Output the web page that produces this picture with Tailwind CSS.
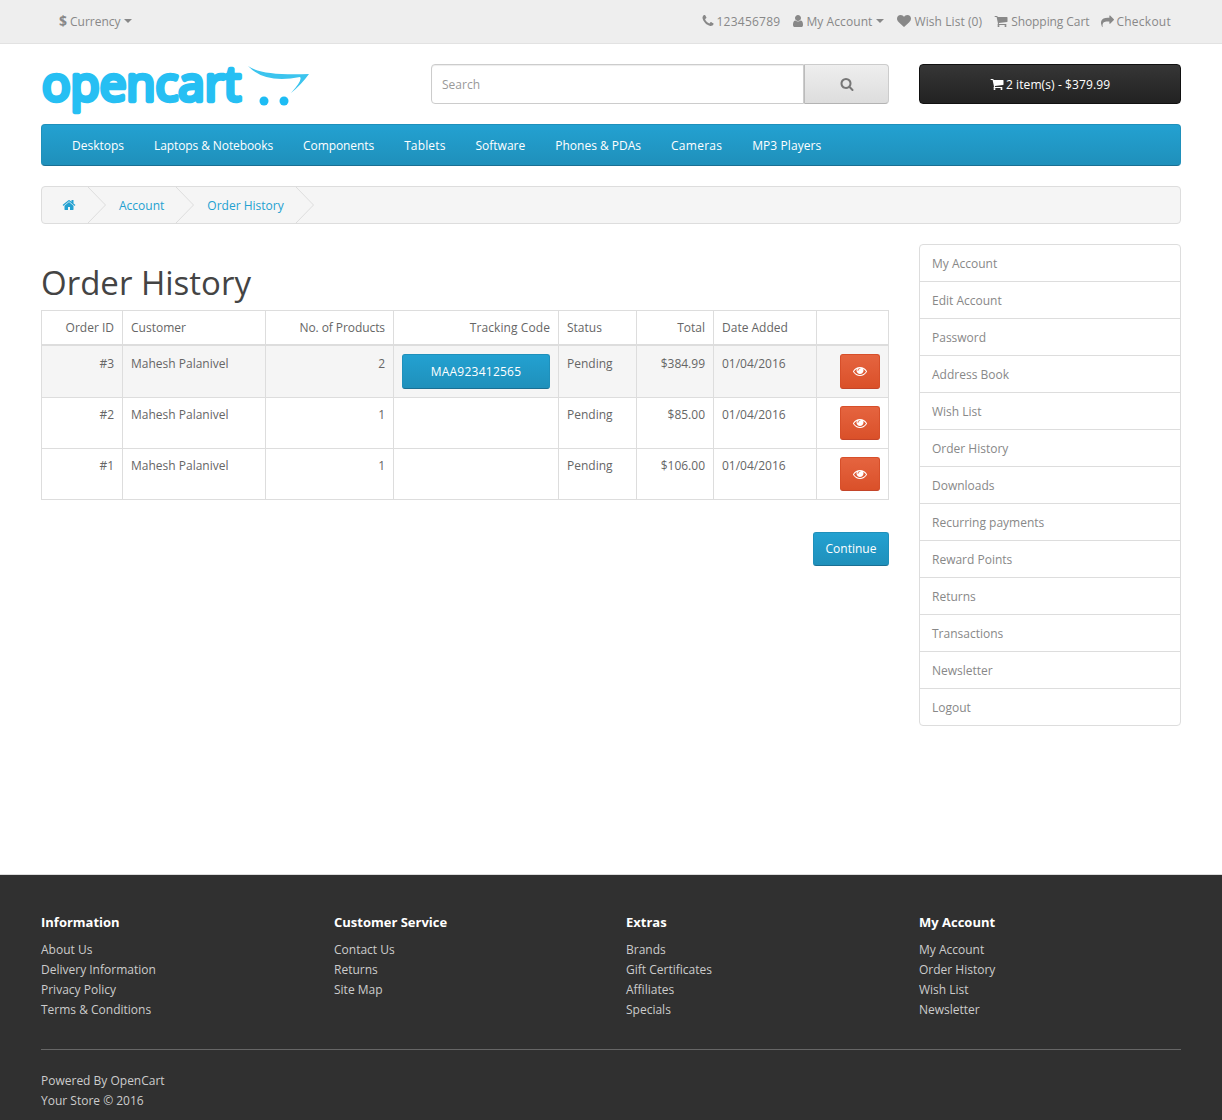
<!DOCTYPE html>
<html lang="en">
<head>
    <meta charset="UTF-8">
    <title>Order History</title>
    <script src="https://cdn.jsdelivr.net/npm/@tailwindcss/browser@4"></script>
</head>
<body class="bg-white text-[12px] leading-[20px] text-[#666] font-['Open_Sans',sans-serif]">

    <!-- Icon set -->
    <svg class="hidden">
        <symbol id="i-heart" viewBox="0 0 1792 1792"><path fill="currentColor" d="M896 1664q-26 0-44-18l-624-602q-10-8-27.500-26t-55.500-65.500-68-97.500-53.500-121-23.500-138q0-220 127-344t351-124q62 0 126.500 21.500t120 58 95.500 68.500 76 68q36-36 76-68t95.500-68.500 120-58 126.500-21.500q224 0 351 124t127 344q0 221-229 450l-623 600q-18 18-44 18z"/></symbol>
        <symbol id="i-cart" viewBox="0 0 1792 1792"><path fill="currentColor" d="M704 1536q0 52-38 90t-90 38-90-38-38-90 38-90 90-38 90 38 38 90zm896 0q0 52-38 90t-90 38-90-38-38-90 38-90 90-38 90 38 38 90zm128-1088v512q0 24-16.500 42.500t-40.500 21.500l-1044 122q13 60 13 70 0 16-24 64h920q26 0 45 19t19 45-19 45-45 19h-1024q-26 0-45-19t-19-45q0-11 8-31.500t16-36 21.500-40 15.500-29.500l-177-823h-204q-26 0-45-19t-19-45 19-45 45-19h256q16 0 28.500 6.500t19.500 15.500 13 24.500 8 26 5.500 29.500 4.500 26h1201q26 0 45 19t19 45z"/></symbol>
        <symbol id="i-search" viewBox="0 0 1792 1792"><path fill="currentColor" d="M1216 832q0-185-131.500-316.500t-316.500-131.500-316.500 131.500-131.500 316.500 131.500 316.500 316.500 131.500 316.500-131.500 131.500-316.500zm512 832q0 52-38 90t-90 38q-54 0-90-38l-343-342q-179 124-399 124-143 0-273.500-55.500t-225-150-150-225-55.500-273.500 55.500-273.500 150-225 225-150 273.500-55.500 273.500 55.500 225 150 150 225 55.500 273.500q0 220-124 399l343 343q37 37 37 90z"/></symbol>
        <symbol id="i-home" viewBox="0 0 1792 1792"><path fill="currentColor" d="M1472 992v480q0 26-19 45t-45 19h-384v-384h-256v384h-384q-26 0-45-19t-19-45v-480q0-1 .5-3t.5-3l575-474 575 474q1 2 1 6zm223-69l-62 74q-8 9-21 11h-3q-13 0-21-7l-692-577-692 577q-12 8-24 7-13-2-21-11l-62-74q-8-10-7-23.500t11-21.500l719-599q32-26 76-26t76 26l244 204v-195q0-14 9-23t23-9h192q14 0 23 9t9 23v408l219 182q10 8 11 21.500t-7 23.500z"/></symbol>
        <symbol id="i-user" viewBox="0 0 1792 1792"><path fill="currentColor" d="M1536 1399q0 109-62.500 187t-150.500 78h-854q-88 0-150.500-78t-62.500-187q0-85 8.500-160.500t31.500-152 58.500-131 94-89 134.500-34.500q131 128 313 128t313-128q76 0 134.500 34.500t94 89 58.500 131 31.500 152 8.500 160.500zm-256-887q0 159-112.500 271.500t-271.500 112.500-271.500-112.500-112.500-271.500 112.500-271.500 271.500-112.500 271.500 112.500 112.500 271.500z"/></symbol>
        <symbol id="i-phone" viewBox="0 0 1792 1792"><path fill="currentColor" d="M1600 1240q0 27-10 70.500t-21 68.500q-21 50-122 106-94 51-186 51-27 0-53-3.500t-57.500-12.500-47-14.500-55.500-20.500-49-18q-98-35-175-83-127-79-264-216t-216-264q-48-77-83-175-3-9-18-49t-20.500-55.500-14.500-47-12.500-57.500-3.500-53q0-92 51-186 56-101 106-122 25-11 68.500-21t70.500-10q14 0 21 3 18 6 53 76 11 19 30 54t35 63.500 31 53.500q3 4 17.500 25t21.500 35.500 7 28.500q0 20-28.500 50t-62 55-62 53-28.500 46q0 9 5 22.500t8.500 20.500 14 24 11.500 19q76 137 174 235t235 174q2 1 19 11.500t24 14 20.500 8.500 22.500 5q18 0 46-28.500t53-62 55-62 50-28.500q14 0 28.500 7t35.500 21.500 25 17.500q25 15 53.500 31t63.500 35 54 30q70 35 76 53 3 7 3 21z"/></symbol>
        <symbol id="i-share" viewBox="0 0 1792 1792"><path fill="currentColor" d="M1792 640q0 26-19 45l-512 512q-19 19-45 19t-45-19-19-45v-256h-224q-98 0-175.500 6t-154 21.500-133 42.500-105.500 69.500-79.500 100.500-49 139-18 182q0 54 5 121 0 6 2.500 23.500t2.500 26.500q0 15-8.500 25t-23.500 10q-16 0-28-17-7-9-13-22t-13.500-30-10.500-24q-127-285-127-451 0-199 53-333 162-403 875-403h224v-256q0-26 19-45t45-19 45 19l512 512q19 19 19 45z"/></symbol>
        <symbol id="i-eye" viewBox="0 0 1792 1792"><path fill="currentColor" d="M1664 960q-152-236-381-353 61 104 61 225 0 185-131.500 316.500t-316.500 131.500-316.500-131.500-131.500-316.500q0-121 61-225-229 117-381 353 133 205 333.500 326.500t434.500 121.500 434.500-121.500 333.500-326.500zm-720-384q0-20-14-34t-34-14q-125 0-214.500 89.500t-89.500 214.500q0 20 14 34t34 14 34-14 14-34q0-86 61-147t147-61q20 0 34-14t14-34zm848 384q0 34-20 69-140 230-376.500 368.500t-499.500 138.500-499.500-139-376.500-368q-20-35-20-69t20-69q140-229 376.500-368t499.500-139 499.500 139 376.500 368q20 35 20 69z"/></symbol>
    </svg>

    <!-- Top bar -->
    <nav class="h-[44px] bg-[#eee] border-b border-[#e2e2e2] text-[#888]">
        <div class="w-[1140px] mx-auto h-[42px] flex items-center justify-between">
            <div class="flex items-center pl-[18px]">
                <span class="font-bold text-[14px] mr-[3px]">$</span>
                <span class="pt-[2px]">Currency</span>
                <span class="ml-[3px] w-0 h-0 border-x-4 border-x-transparent border-t-4 border-t-[#888]"></span>
            </div>
            <div class="flex items-center pr-[10px]">
                <svg class="w-[14px] h-[14px] mr-[1px]"><use href="#i-phone"/></svg><span class="pt-[2px] tracking-[0.25px]">123456789</span>
                <svg class="w-[14px] h-[14px] ml-[11px] mr-[1px]"><use href="#i-user"/></svg><span class="pt-[2px] tracking-[0.08px]">My Account</span><span class="ml-[4px] w-0 h-0 border-x-4 border-x-transparent border-t-4 border-t-[#888]"></span>
                <svg class="w-[14px] h-[14px] ml-[13px] mr-[3px]"><use href="#i-heart"/></svg><span class="pt-[2px] tracking-[0.08px]">Wish List (0)</span>
                <svg class="w-[14px] h-[14px] ml-[12px] mr-[3px]"><use href="#i-cart"/></svg><span class="pt-[2px] tracking-[-0.08px]">Shopping Cart</span>
                <svg class="w-[13px] h-[13px] ml-[12px] mr-[2px]"><use href="#i-share"/></svg><span class="pt-[2px] tracking-[0.25px]">Checkout</span>
            </div>
        </div>
    </nav>

    <!-- Header -->
    <header class="w-[1140px] mx-auto pt-[20px] flex gap-[30px]">
        <div class="w-[360px] h-[50px]">
            <svg class="overflow-visible" width="270" height="50" viewBox="0 0 270 50">
                <text x="1" y="37" font-family="Open Sans" font-size="48" textLength="199" lengthAdjust="spacingAndGlyphs" fill="#26bff3" stroke="#26bff3" stroke-width="4.500" stroke-linejoin="round">opencart</text>
                <path d="M207 2Q221 12 268 10Q260 21 250 29Q262 16 259 13Q224 20 207 2Z" fill="#3cc4ee"/>
                <circle cx="223" cy="37" r="4.500" fill="#1dbcf4"/>
                <circle cx="243" cy="37" r="4.500" fill="#1dbcf4"/>
            </svg>
        </div>
        <div class="w-[458px] h-[40px] flex">
            <div class="w-[373px] h-[40px] px-[10px] pt-[2px] flex items-center bg-white border border-[#ccc] rounded-l-[4px] shadow-[inset_0_1px_1px_rgba(0,0,0,0.075)] text-[#999]">Search</div>
            <div class="w-[85px] h-[40px] flex items-center justify-center bg-gradient-to-b from-[#eee] to-[#ddd] border border-[#ccc] border-b-[#b3b3b3] border-l-[#bbb] rounded-r-[4px] text-[#777]">
                <svg class="w-[14px] h-[14px]"><use href="#i-search"/></svg>
            </div>
        </div>
        <div class="w-[262px] h-[40px] flex items-center justify-center gap-[2px] bg-gradient-to-b from-[#363636] to-[#222] border border-[#111] rounded-[4px] text-white">
            <svg class="w-[14px] h-[14px]"><use href="#i-cart"/></svg>
            <span class="pt-[2px] tracking-[0.1px]">2 item(s) - $379.99</span>
        </div>
    </header>

    <!-- Menu -->
    <div class="w-[1140px] mx-auto mt-[10px] h-[42px] pt-[2px] flex items-center gap-[30px] pl-[30px] bg-gradient-to-b from-[#23a1d1] to-[#1f90bb] border border-[#1f90bb] border-b-[#1a6f93] rounded-[4px] text-white">
        <span>Desktops</span>
        <span class="tracking-[-0.1px]">Laptops &amp; Notebooks</span>
        <span class="tracking-[-0.08px]">Components</span>
        <span class="tracking-[0.14px]">Tablets</span>
        <span>Software</span>
        <span>Phones &amp; PDAs</span>
        <span class="tracking-[0.25px]">Cameras</span>
        <span class="tracking-[0.08px]">MP3 Players</span>
    </div>

    <!-- Breadcrumb -->
    <div class="w-[1140px] mx-auto mt-[20px] h-[38px] flex items-center pl-[20px] bg-[#f5f5f5] border border-[#ddd] rounded-[4px] text-[#23a1d1]">
        <svg class="w-[14px] h-[14px]"><use href="#i-home"/></svg>
        <svg class="w-[18px] h-[36px] mx-[12px] text-[#ddd]" viewBox="0 0 18 36"><path d="M0 0L17.500 18L0 36" fill="none" stroke="currentColor"/></svg>
        <span class="ml-[1px] pt-[2px]">Account</span>
        <svg class="w-[18px] h-[36px] mx-[12px] text-[#ddd]" viewBox="0 0 18 36"><path d="M0 0L17.500 18L0 36" fill="none" stroke="currentColor"/></svg>
        <span class="ml-[1px] pt-[2px]">Order History</span>
        <svg class="w-[18px] h-[36px] mx-[12px] text-[#ddd]" viewBox="0 0 18 36"><path d="M0 0L17.500 18L0 36" fill="none" stroke="currentColor"/></svg>
    </div>

    <!-- Main -->
    <main class="w-[1140px] mx-auto mt-[20px] h-[630px] flex gap-[30px]">
        <div class="w-[848px]">
            <h1 class="mt-[18px] mb-[6px] text-[33px] leading-[42px] text-[#444]">Order History</h1>
            <table class="w-[847px] table-fixed border-collapse">
                <colgroup>
                    <col class="w-[81px]"><col class="w-[143px]"><col class="w-[128px]"><col class="w-[165px]"><col class="w-[78px]"><col class="w-[77px]"><col class="w-[103px]"><col class="w-[72px]">
                </colgroup>
                <thead>
                    <tr class="h-[34px]">
                        <td class="border border-[#ddd] border-b-2 px-[8px] pt-[1px] text-right">Order ID</td>
                        <td class="border border-[#ddd] border-b-2 px-[8px] pt-[1px]">Customer</td>
                        <td class="border border-[#ddd] border-b-2 px-[8px] pt-[1px] text-right tracking-[-0.08px]">No. of Products</td>
                        <td class="border border-[#ddd] border-b-2 px-[8px] pt-[1px] text-right tracking-[0.08px]">Tracking Code</td>
                        <td class="border border-[#ddd] border-b-2 px-[8px] pt-[1px]">Status</td>
                        <td class="border border-[#ddd] border-b-2 px-[8px] pt-[1px] text-right">Total</td>
                        <td class="border border-[#ddd] border-b-2 px-[8px] pt-[1px]">Date Added</td>
                        <td class="border border-[#ddd] border-b-2 px-[8px] pt-[1px]"></td>
                    </tr>
                </thead>
                <tbody>
                    <tr class="h-[52px] bg-[#f5f5f5]">
                        <td class="border border-[#ddd] p-[8px] align-top text-right">#3</td>
                        <td class="border border-[#ddd] p-[8px] align-top">Mahesh Palanivel</td>
                        <td class="border border-[#ddd] p-[8px] align-top text-right">2</td>
                        <td class="border border-[#ddd] p-[8px] align-top">
                            <div class="h-[35px] pt-[2px] flex items-center justify-center bg-gradient-to-b from-[#23a1d1] to-[#1f90bb] border border-[#1f90bb] border-b-[#1a6f93] rounded-[3px] text-white tracking-[0.25px]">MAA923412565</div>
                        </td>
                        <td class="border border-[#ddd] p-[8px] align-top">Pending</td>
                        <td class="border border-[#ddd] p-[8px] align-top text-right">$384.99</td>
                        <td class="border border-[#ddd] p-[8px] align-top">01/04/2016</td>
                        <td class="border border-[#ddd] p-[8px] align-top">
                            <div class="ml-auto w-[40px] h-[35px] flex items-center justify-center bg-gradient-to-b from-[#e5643f] to-[#da5029] border border-[#d74f2a] border-b-[#c4452a] rounded-[3px] text-white"><svg class="w-[14px] h-[14px]"><use href="#i-eye"/></svg></div>
                        </td>
                    </tr>
                    <tr class="h-[51px]">
                        <td class="border border-[#ddd] px-[8px] pt-[7px] pb-[8px] align-top text-right">#2</td>
                        <td class="border border-[#ddd] px-[8px] pt-[7px] pb-[8px] align-top">Mahesh Palanivel</td>
                        <td class="border border-[#ddd] px-[8px] pt-[7px] pb-[8px] align-top text-right">1</td>
                        <td class="border border-[#ddd] px-[8px] pt-[7px] pb-[8px] align-top"></td>
                        <td class="border border-[#ddd] px-[8px] pt-[7px] pb-[8px] align-top">Pending</td>
                        <td class="border border-[#ddd] px-[8px] pt-[7px] pb-[8px] align-top text-right">$85.00</td>
                        <td class="border border-[#ddd] px-[8px] pt-[7px] pb-[8px] align-top">01/04/2016</td>
                        <td class="border border-[#ddd] p-[8px] align-top">
                            <div class="ml-auto w-[40px] h-[34px] flex items-center justify-center bg-gradient-to-b from-[#e5643f] to-[#da5029] border border-[#d74f2a] border-b-[#c4452a] rounded-[3px] text-white"><svg class="w-[14px] h-[14px]"><use href="#i-eye"/></svg></div>
                        </td>
                    </tr>
                    <tr class="h-[51px]">
                        <td class="border border-[#ddd] px-[8px] pt-[7px] pb-[8px] align-top text-right">#1</td>
                        <td class="border border-[#ddd] px-[8px] pt-[7px] pb-[8px] align-top">Mahesh Palanivel</td>
                        <td class="border border-[#ddd] px-[8px] pt-[7px] pb-[8px] align-top text-right">1</td>
                        <td class="border border-[#ddd] px-[8px] pt-[7px] pb-[8px] align-top"></td>
                        <td class="border border-[#ddd] px-[8px] pt-[7px] pb-[8px] align-top">Pending</td>
                        <td class="border border-[#ddd] px-[8px] pt-[7px] pb-[8px] align-top text-right">$106.00</td>
                        <td class="border border-[#ddd] px-[8px] pt-[7px] pb-[8px] align-top">01/04/2016</td>
                        <td class="border border-[#ddd] p-[8px] align-top">
                            <div class="ml-auto w-[40px] h-[34px] flex items-center justify-center bg-gradient-to-b from-[#e5643f] to-[#da5029] border border-[#d74f2a] border-b-[#c4452a] rounded-[3px] text-white"><svg class="w-[14px] h-[14px]"><use href="#i-eye"/></svg></div>
                        </td>
                    </tr>
                </tbody>
            </table>
            <div class="mt-[32px] flex justify-end">
                <div class="w-[76px] h-[34px] flex items-center justify-center bg-gradient-to-b from-[#23a1d1] to-[#1f90bb] border border-[#1f90bb] border-b-[#1a6f93] rounded-[3px] text-white">Continue</div>
            </div>
        </div>

        <!-- Sidebar -->
        <aside class="w-[262px] h-[482px] border border-[#ddd] rounded-[4px] text-[#888] flex flex-col">
            <div class="h-[37px] shrink-0 pt-[2px] flex items-center px-[12px] border-b border-[#ddd]">My Account</div>
            <div class="h-[37px] shrink-0 pt-[2px] flex items-center px-[12px] border-b border-[#ddd]">Edit Account</div>
            <div class="h-[37px] shrink-0 pt-[2px] flex items-center px-[12px] border-b border-[#ddd]">Password</div>
            <div class="h-[37px] shrink-0 pt-[2px] flex items-center px-[12px] border-b border-[#ddd]">Address Book</div>
            <div class="h-[37px] shrink-0 pt-[2px] flex items-center px-[12px] border-b border-[#ddd]">Wish List</div>
            <div class="h-[37px] shrink-0 pt-[2px] flex items-center px-[12px] border-b border-[#ddd]">Order History</div>
            <div class="h-[37px] shrink-0 pt-[2px] flex items-center px-[12px] border-b border-[#ddd]">Downloads</div>
            <div class="h-[37px] shrink-0 pt-[2px] flex items-center px-[12px] border-b border-[#ddd]">Recurring payments</div>
            <div class="h-[37px] shrink-0 pt-[2px] flex items-center px-[12px] border-b border-[#ddd]">Reward Points</div>
            <div class="h-[37px] shrink-0 pt-[2px] flex items-center px-[12px] border-b border-[#ddd]">Returns</div>
            <div class="h-[37px] shrink-0 pt-[2px] flex items-center px-[12px] border-b border-[#ddd]">Transactions</div>
            <div class="h-[37px] shrink-0 pt-[2px] flex items-center px-[12px] border-b border-[#ddd]">Newsletter</div>
            <div class="h-[36px] shrink-0 pt-[2px] flex items-center px-[12px]">Logout</div>
        </aside>
    </main>

    <!-- Footer -->
    <footer class="h-[246px] bg-[#303030] border-t border-[#ddd] text-[#ccc]">
        <div class="w-[1140px] mx-auto pt-[37px]">
            <div class="grid grid-cols-[293px_292px_293px_262px] h-[124px]">
                <div>
                    <h5 class="mb-[8px] text-[13px] font-bold text-white">Information</h5>
                    <p>About Us</p><p>Delivery Information</p><p>Privacy Policy</p><p>Terms &amp; Conditions</p>
                </div>
                <div>
                    <h5 class="mb-[8px] text-[13px] font-bold text-white">Customer Service</h5>
                    <p>Contact Us</p><p>Returns</p><p>Site Map</p>
                </div>
                <div>
                    <h5 class="mb-[8px] text-[13px] font-bold text-white">Extras</h5>
                    <p>Brands</p><p>Gift Certificates</p><p>Affiliates</p><p>Specials</p>
                </div>
                <div>
                    <h5 class="mb-[8px] text-[13px] font-bold text-white">My Account</h5>
                    <p>My Account</p><p>Order History</p><p>Wish List</p><p>Newsletter</p>
                </div>
            </div>
            <hr class="mt-[13px] border-[#666]">
            <p class="mt-[21px]">Powered By OpenCart</p>
            <p>Your Store © 2016</p>
        </div>
    </footer>

</body>
</html>
